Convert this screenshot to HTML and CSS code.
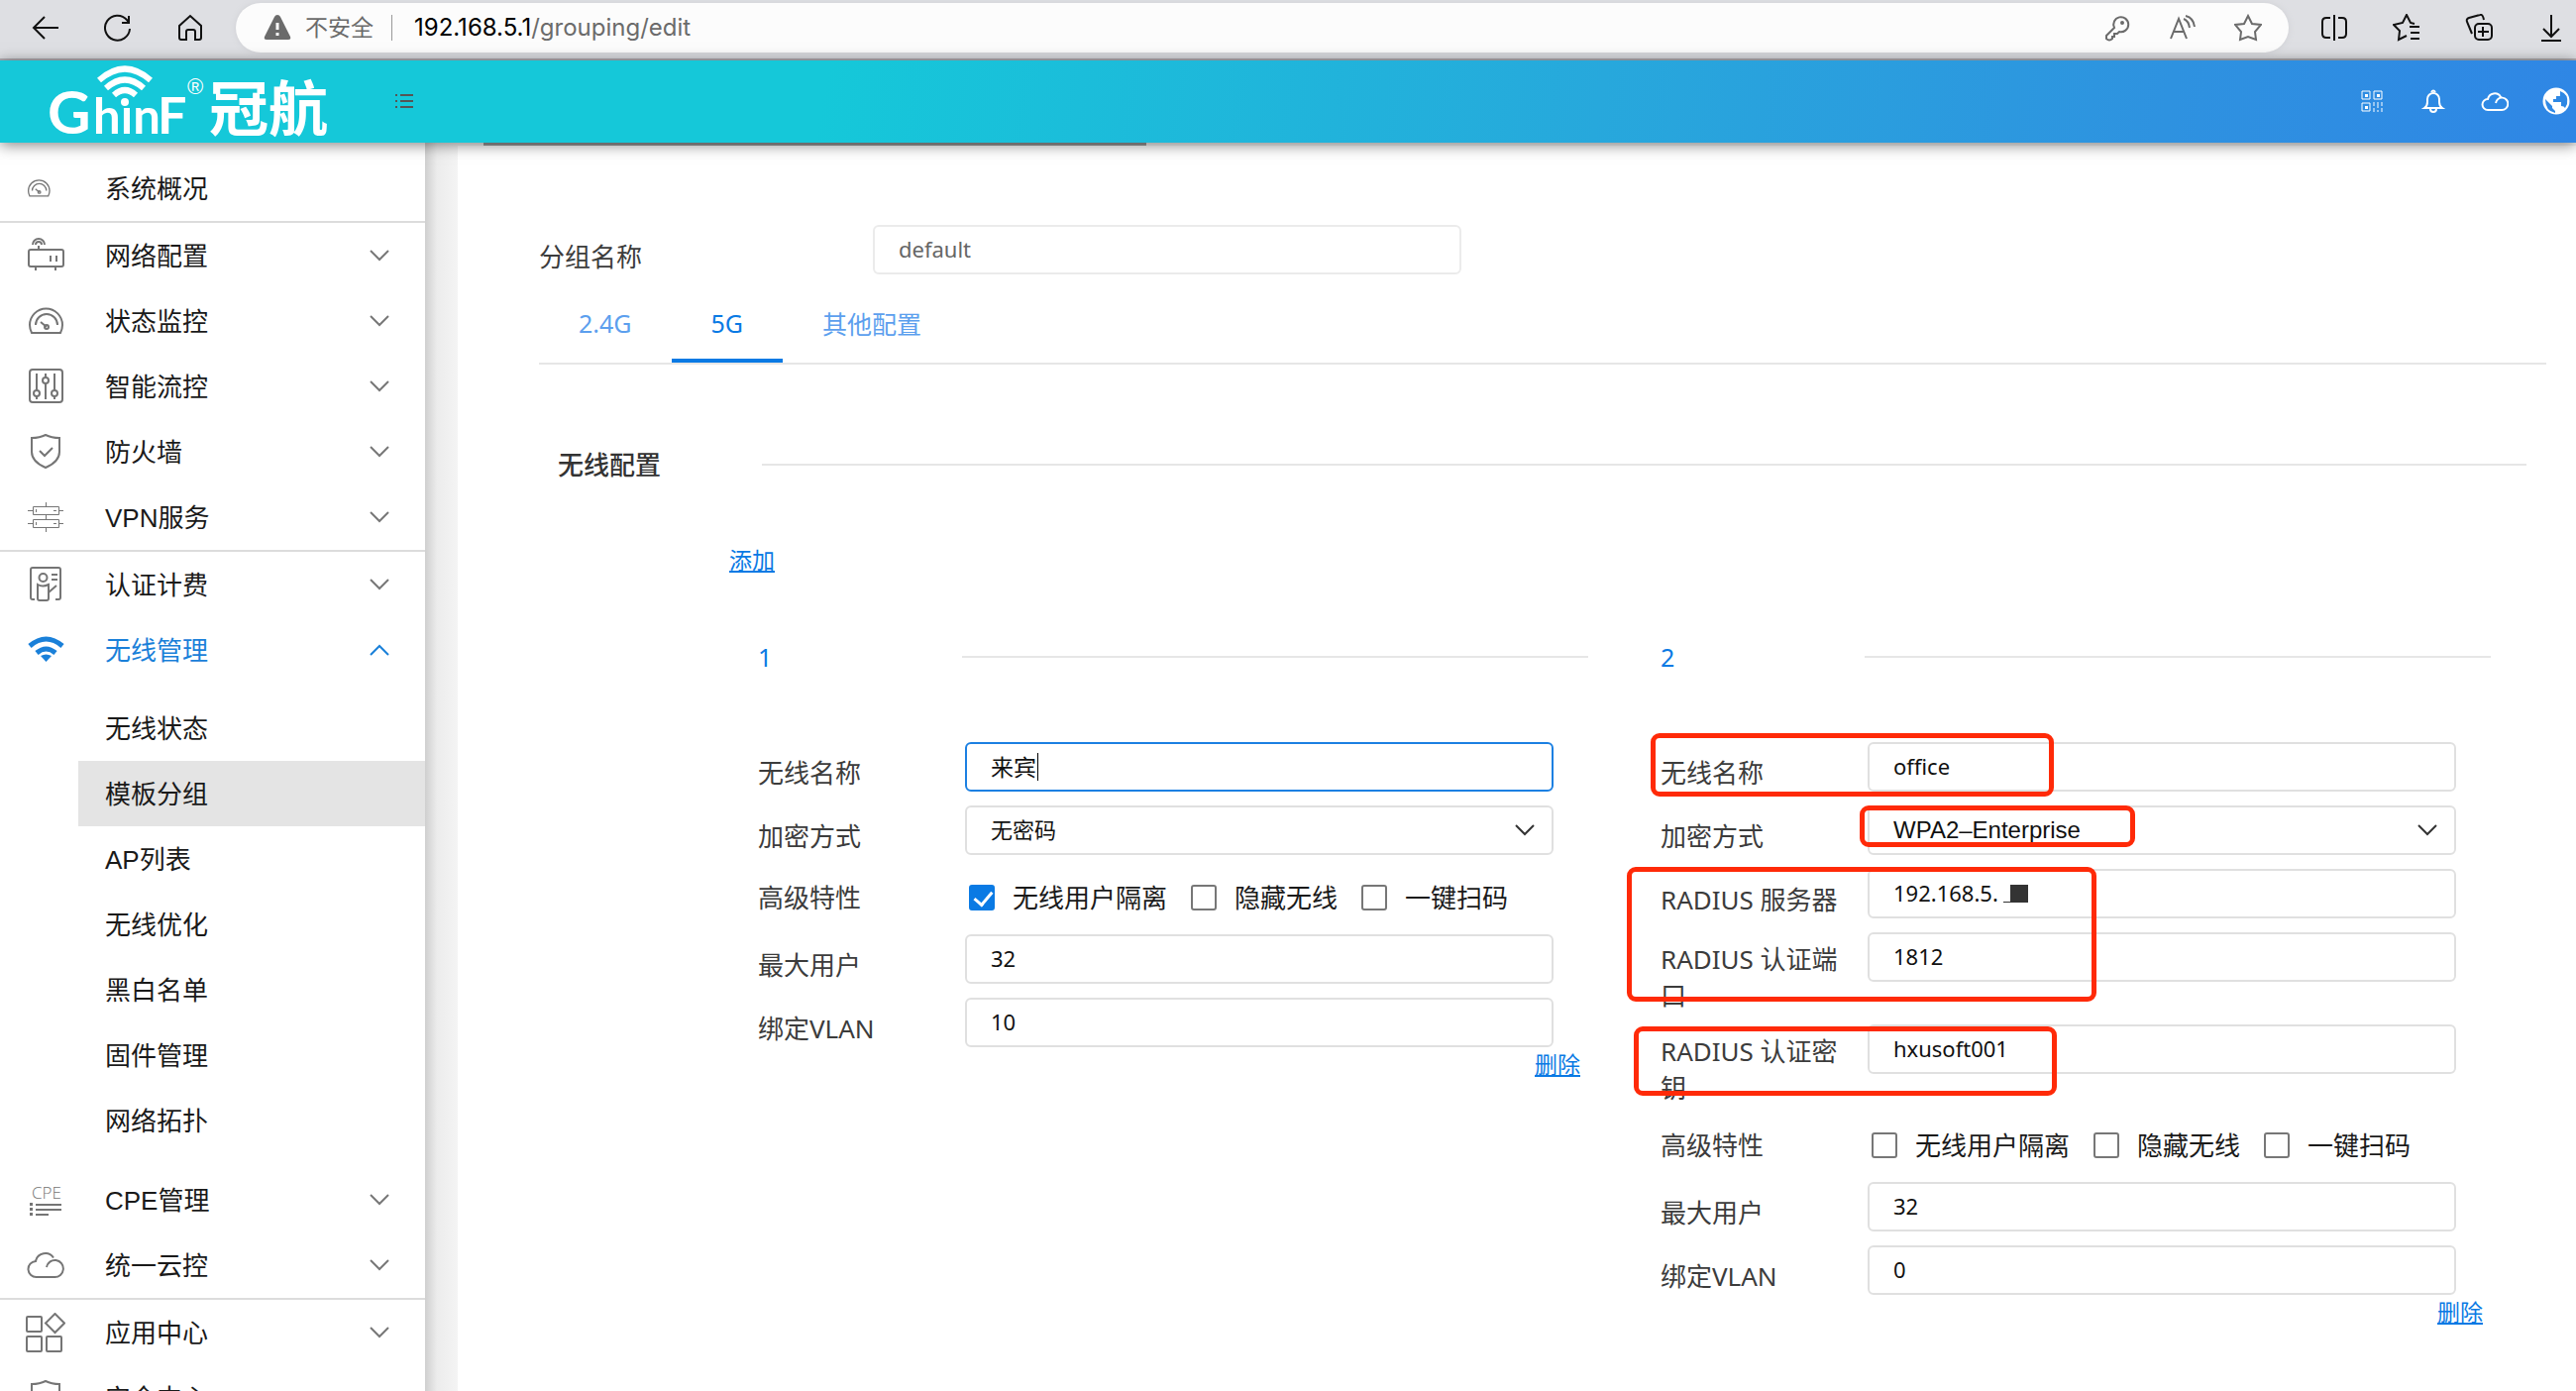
FILE: index.html
```html
<!DOCTYPE html>
<html lang="zh-CN">
<head>
<meta charset="utf-8">
<title>模板分组</title>
<link rel="stylesheet" href="styles.css">
</head>
<body>
<svg class="defs" aria-hidden="true">
  <symbol id="chevron" viewBox="0 0 22 14"><path d="M2 2l9 9 9-9"/></symbol>
  <symbol id="gauge" viewBox="0 0 40 40"><path d="M6 32Q4 28 4 24a16 16 0 0 1 33 0q0 4-2 8z"/><path d="M10 24a11 11 0 0 1 22 0"/><path d="M15 21l6 5"/><circle cx="21" cy="26" r="2"/></symbol>
  <symbol id="cloud" viewBox="0 0 40 40"><path d="M11 32a8 8 0 0 1-1-16 10 10 0 0 1 18-3.500M21 22a8.500 8.500 0 1 1 8 10H10"/></symbol>
  <symbol id="shield" viewBox="0 0 40 40"><path d="M6 6q8 0 14-3 6 3 14 3v14q0 10-14 16Q6 30 6 20z"/><path d="M14 19l5 5 8-8"/></symbol>
</svg>

<div class="toolbar">
  <div class="toolbar__group">
    <button class="tool" aria-label="返回"><svg viewBox="0 0 28 28"><path d="M27 14H2M13 3L2 14l11 11"/></svg></button>
    <button class="tool" aria-label="刷新"><svg viewBox="0 0 28 28"><path d="M26 15a12.500 12.500 0 1 1-3-9l2 3M25 2v7h-7"/></svg></button>
    <button class="tool" aria-label="主页"><svg viewBox="0 0 28 28"><path d="M3 12L14 2l11 10v12q0 2-2 2h-4v-8q0-2-2-2h-5q-2 0-2 2v8H5q-2 0-2-2z"/></svg></button>
  </div>
  <div class="address">
    <svg class="address__warn" viewBox="0 0 28 28"><path class="solid" d="M14 1q2 0 3 2l10 20q1 3-2 3H3q-3 0-2-3L11 3q1-2 3-2z"/><path class="mark" d="M14 9v7M14 19v3"/></svg>
    <span class="address__state">不安全</span>
    <span class="address__url"><b>192.168.5.1</b>/grouping/edit</span>
    <div class="address__tools">
      <button class="tool" aria-label="密码"><svg viewBox="0 0 28 28"><path d="M11 14a7.500 7.500 0 1 1 5 4l-2 2h-3v3H9v2q-3 3-6 0v-3z"/><circle cx="19" cy="9" r="1"/></svg></button>
      <button class="tool" aria-label="朗读"><svg viewBox="0 0 28 28"><path d="M2 25L10 5l8 20M5 18h10M15 5q5 2 6 9M17 2q8 2 9 11"/></svg></button>
      <button class="tool" aria-label="收藏"><svg viewBox="0 0 28 28"><path d="M14 2l4 8 9 1-6 7 1 8-8-3-8 3 1-8-6-7 9-1z"/></svg></button>
    </div>
  </div>
  <div class="toolbar__group">
    <button class="tool" aria-label="分屏"><svg viewBox="0 0 28 28"><path d="M10 4H6Q2 4 2 8v12q0 4 4 4h4M18 4h4q4 0 4 4v12q0 4-4 4h-4M14 1v26"/></svg></button>
    <button class="tool" aria-label="收藏夹"><svg viewBox="0 0 28 28"><path d="M22 10l-4-1-4-8-4 8-9 2 6 6-1 9 8-4M17 13h10M18 19h9M18 25h9"/></svg></button>
    <button class="tool" aria-label="集锦"><svg viewBox="0 0 28 28"><rect x="10" y="10" width="17" height="16" rx="4"/><path d="M18 13v10M13 18h11M7 20L2 8q-1-3 2-4l11-3q3-1 4 5"/></svg></button>
    <button class="tool" aria-label="下载"><svg viewBox="0 0 28 28"><path d="M14 1v22M6 15l8 8 8-8M4 27h20"/></svg></button>
  </div>
</div>

<header class="header">
  <svg class="logo" viewBox="0 -4 290 83" role="img" aria-label="GhinF 冠航">
    <text class="logo__latin" x="-2" y="70" font-size="60">G</text>
    <text class="logo__latin" x="44" y="70" font-size="49">hın</text>
    <text class="logo__latin" x="109" y="70" font-size="52">F</text>
    <text class="logo__reg" x="139" y="30">®</text>
    <text class="logo__cjk" x="161" y="67">冠航</text>
    <circle cx="76" cy="38" r="4"/>
    <path d="M50 16q26-23 52 0M57 24q19-17 38 0M65 31q11-10 22 0"/>
  </svg>
  <button class="header__menu" aria-label="菜单"><svg viewBox="0 0 18 16"><path d="M5 2h13M5 8h13M5 14h13M0 2h2M0 8h2M0 14h2"/></svg></button>
  <div class="header__tools">
    <button class="tool" aria-label="二维码"><svg class="qr" viewBox="0 0 28 28"><path d="M4 4h8v8H4zM16 4h8v8h-8zM4 16h8v8H4zM16 15v4M16 21v4M20 15v6M20 23v2M24 15v4M24 21v4"/><path class="solid" d="M7 7h3v3H7zM19 7h3v3h-3zM7 19h3v3H7z"/></svg></button>
    <button class="tool" aria-label="通知"><svg viewBox="0 0 28 28"><path d="M5 21q3-2 3-6v-3a6 6 0 0 1 12 0v3q0 4 3 6zM11 22a3 3 0 0 0 6 0M12 5q2-3 4 0"/></svg></button>
    <button class="tool" aria-label="云"><svg viewBox="0 0 28 28"><path d="M7 23a5.500 5.500 0 0 1 0-11 7 7 0 0 1 13-2M15 16a6.200 6.200 0 1 1 6 7H7"/></svg></button>
    <button class="tool" aria-label="语言"><svg viewBox="0 0 28 28"><circle class="solid" cx="14" cy="14" r="13.500"/><path class="land" d="M3 12l7 7v2l3 3v2Q3 24 3 12zM18 4q9 3 7 13l-2 4q-1-2-4-2v-4h-8v-3h3V9h4z"/></svg></button>
  </div>
</header>

<div class="app">
  <nav class="sidebar">
    <a class="nav" href="#"><svg class="nav__icon nav__icon--small"><use href="#gauge"/></svg>系统概况</a>
    <hr>
    <a class="nav" href="#"><svg class="nav__icon" viewBox="0 0 40 40"><rect x="3" y="14" width="35" height="17" rx="2"/><path d="M10 31v4M30 31v4M25 20v6M31 20v6M13 10v4M7 9a6 6 0 0 1 12 0M10 9a3 3 0 0 1 6 0"/></svg>网络配置<svg class="nav__arrow"><use href="#chevron"/></svg></a>
    <a class="nav" href="#"><svg class="nav__icon"><use href="#gauge"/></svg>状态监控<svg class="nav__arrow"><use href="#chevron"/></svg></a>
    <a class="nav" href="#"><svg class="nav__icon" viewBox="0 0 40 40"><rect x="4" y="3" width="33" height="33" rx="3"/><path d="M11 7v17M11 30v3M20 7v4M20 16v17M29 7v17M29 30v3"/><circle cx="11" cy="27" r="3"/><circle cx="20" cy="14" r="3"/><circle cx="29" cy="27" r="3"/></svg>智能流控<svg class="nav__arrow"><use href="#chevron"/></svg></a>
    <a class="nav" href="#"><svg class="nav__icon"><use href="#shield"/></svg>防火墙<svg class="nav__arrow"><use href="#chevron"/></svg></a>
    <a class="nav" href="#"><svg class="nav__icon nav__icon--thin" viewBox="0 0 40 40"><path d="M7.500 9.500h26v8h-26zM7.500 22.500h26v8h-26zM20.500 5v4M20.500 18v4M20.500 31v4M2 13.500h5M34 13.500h4M2 26.500h5M34 26.500h4M10.500 12v3M10.500 25v3M28 13.500h3M28 26.500h3"/></svg>VPN服务<svg class="nav__arrow"><use href="#chevron"/></svg></a>
    <hr>
    <a class="nav" href="#"><svg class="nav__icon" viewBox="0 0 40 40"><path d="M9 35H7q-2 0-2-2V5q0-2 2-2h26q2 0 2 2v28q0 2-2 2h-3M12 20q5 3 11 0v14q0 2-2 2h-7q-2 0-2-2zM23 28l8-7M26 10h6M26 15h6"/><circle cx="17.500" cy="13" r="4"/></svg>认证计费<svg class="nav__arrow"><use href="#chevron"/></svg></a>
    <a class="nav nav--open" href="#"><svg class="nav__icon" viewBox="0 0 40 40"><path class="wifi" d="M4 16q16.500-14 33 0M11 23q9.500-8 19 0"/><path class="solid" d="M15 26q5.500-3 11 0l-5.500 6z"/></svg>无线管理<svg class="nav__arrow"><use href="#chevron"/></svg></a>
    <div class="subnav">
      <a href="#">无线状态</a>
      <a class="is-active" href="#">模板分组</a>
      <a href="#">AP列表</a>
      <a href="#">无线优化</a>
      <a href="#">黑白名单</a>
      <a href="#">固件管理</a>
      <a href="#">网络拓扑</a>
    </div>
    <a class="nav" href="#"><svg class="nav__icon" viewBox="0 0 40 40"><text class="cpe" x="6" y="19">CPE</text><path d="M10 25h26M10 30h26M10 35h13"/><path class="solid" d="M4 23h3v3H4zM4 28h3v3H4zM4 33h3v3H4z"/></svg>CPE管理<svg class="nav__arrow"><use href="#chevron"/></svg></a>
    <a class="nav" href="#"><svg class="nav__icon"><use href="#cloud"/></svg>统一云控<svg class="nav__arrow"><use href="#chevron"/></svg></a>
    <hr>
    <a class="nav" href="#"><svg class="nav__icon" viewBox="0 0 40 40"><rect x="1" y="4" width="15" height="15" rx="1"/><rect x="1" y="24" width="15" height="15" rx="1"/><rect x="21" y="24" width="15" height="15" rx="1"/><path d="M29.500 1l9.500 9.500-9.500 9.500-9.500-9.500z"/></svg>应用中心<svg class="nav__arrow"><use href="#chevron"/></svg></a>
    <a class="nav" href="#"><svg class="nav__icon"><use href="#shield"/></svg>安全中心<svg class="nav__arrow"><use href="#chevron"/></svg></a>
  </nav>

  <main class="main">
    <div class="topbar"></div>
    <form class="panel">
      <div class="group-row">
        <label class="label" for="group">分组名称</label>
        <input class="input" id="group" value="default" disabled>
      </div>
      <div class="tabs" role="tablist">
        <button type="button" role="tab" class="tab">2.4G</button>
        <button type="button" role="tab" class="tab is-active" aria-selected="true">5G</button>
        <button type="button" role="tab" class="tab">其他配置</button>
      </div>
      <h2 class="section">无线配置</h2>
      <a class="link add" href="#">添加</a>

      <div class="blocks">
        <section class="block">
          <h3 class="block__title">1</h3>
          <div class="fields">
            <div class="field"><label class="label" for="n1">无线名称</label><div class="control"><input class="input is-focus" id="n1" value="来宾"><span class="caret"></span></div></div>
            <div class="field"><label class="label" for="e1">加密方式</label><div class="control"><select class="input" id="e1"><option>无密码</option></select><svg class="control__arrow"><use href="#chevron"/></svg></div></div>
            <div class="field field--checks"><span class="label">高级特性</span><div class="checks">
              <label><input type="checkbox" checked>无线用户隔离</label>
              <label><input type="checkbox">隐藏无线</label>
              <label><input type="checkbox">一键扫码</label></div></div>
            <div class="field"><label class="label" for="m1">最大用户</label><div class="control"><input class="input" id="m1" value="32"></div></div>
            <div class="field"><label class="label" for="v1">绑定VLAN</label><div class="control"><input class="input" id="v1" value="10"></div></div>
          </div>
          <a class="link delete" href="#">删除</a>
        </section>

        <section class="block">
          <h3 class="block__title">2</h3>
          <div class="fields">
            <div class="field"><label class="label" for="n2">无线名称</label><div class="control"><input class="input" id="n2" value="office"></div></div>
            <div class="field"><label class="label" for="e2">加密方式</label><div class="control"><select class="input input--latin" id="e2"><option>WPA2–Enterprise</option></select><svg class="control__arrow"><use href="#chevron"/></svg></div></div>
            <div class="field"><label class="label" for="r2">RADIUS 服务器</label><div class="control"><input class="input" id="r2" value="192.168.5."><span class="redaction"></span></div></div>
            <div class="field field--wrap"><label class="label" for="p2">RADIUS 认证端口</label><div class="control"><input class="input" id="p2" value="1812"></div></div>
            <div class="field field--wrap"><label class="label" for="k2">RADIUS 认证密钥</label><div class="control"><input class="input" id="k2" value="hxusoft001"></div></div>
            <div class="field field--checks"><span class="label">高级特性</span><div class="checks">
              <label><input type="checkbox">无线用户隔离</label>
              <label><input type="checkbox">隐藏无线</label>
              <label><input type="checkbox">一键扫码</label></div></div>
            <div class="field"><label class="label" for="m2">最大用户</label><div class="control"><input class="input" id="m2" value="32"></div></div>
            <div class="field"><label class="label" for="v2">绑定VLAN</label><div class="control"><input class="input" id="v2" value="0"></div></div>
            <span class="note note--name"></span>
            <span class="note note--cipher"></span>
            <span class="note note--server"></span>
            <span class="note note--key"></span>
          </div>
          <a class="link delete" href="#">删除</a>
        </section>
      </div>
    </form>
  </main>
</div>
</body>
</html>
```
FILE: styles.css
```css
* { box-sizing: border-box; }
body {
  margin: 0;
  height: 100vh;
  display: flex;
  flex-direction: column;
  overflow: hidden;
  background: #f2f2f2;
  font-family: "Noto Sans", "Noto Sans CJK SC", sans-serif;
  font-size: 26px;
}
a { color: inherit; text-decoration: none; }
button { border: 0; padding: 0; background: none; font: inherit; color: inherit; }
svg { fill: none; stroke: currentColor; stroke-width: 2; flex: none; }
svg text, svg .solid { fill: currentColor; stroke: none; }
.defs { position: absolute; width: 0; height: 0; }

/* browser toolbar */
.toolbar {
  display: flex;
  align-items: center;
  flex: none;
  height: 61px;
  padding: 0 11px 4px 32px;
  gap: 32px;
  background: #dedfe3;
  border-bottom: 2px solid #b0aeb4;
  color: #111;
}
.toolbar__group { display: flex; gap: 45px; }
.tool { display: block; width: 28px; height: 28px; }
.tool svg { display: block; width: 28px; height: 28px; }
.address {
  flex: 1;
  display: flex;
  align-items: center;
  height: 50px;
  padding: 0 27px 0 28px;
  border-radius: 25px;
  background: #fcfcfc;
  box-shadow: 0 0 6px #cfd0d4;
  color: #6b6b6b;
  font: 24px "Inter", "Noto Sans CJK SC", sans-serif;
}
.address__warn { width: 28px; height: 28px; margin-right: 14px; }
.address__warn .mark { stroke: #fcfcfc; stroke-width: 3; }
.address__state { padding-right: 18px; border-right: 1px solid #999; font-size: 23px; line-height: 26px; }
.address__url { margin-left: 22px; }
.address__url b { font-weight: 400; color: #000; }
.address__tools { display: flex; gap: 38px; margin-left: auto; }

/* product header */
.header {
  position: relative;
  z-index: 2;
  display: flex;
  align-items: center;
  flex: none;
  height: 83px;
  padding: 0 6px 0 50px;
  background: linear-gradient(100deg, #15c8d9 0%, #15c8d9 32%, #27a8dc 62%, #2e92e0 84%, #2f86e5 100%);
  box-shadow: 0 2px 14px rgba(0, 0, 0, .5);
  color: #fff;
}
.logo { width: 290px; height: 83px; overflow: visible; }
.logo circle { fill: #fff; stroke: none; }
.logo path { stroke-width: 6; }
.logo__latin { font-family: "Lato", sans-serif; font-weight: 700; }
.logo__reg { font: 22px "Liberation Sans", sans-serif; }
.logo__cjk { font: 700 60px "Noto Sans CJK SC", sans-serif; }
.header__menu { margin-left: 59px; padding-bottom: 2px; color: #555; }
.header__menu svg { display: block; width: 18px; height: 16px; }
.header__tools { display: flex; gap: 34px; margin-left: auto; padding-bottom: 2px; }
.header__tools .qr { stroke-width: 1; }
.header__tools .land { fill: #2f88e4; stroke: none; }

/* layout */
.app { flex: 1; display: flex; min-height: 0; }
.sidebar {
  position: relative;
  z-index: 1;
  flex: none;
  width: 429px;
  padding-top: 13px;
  overflow: hidden;
  background: #fff;
  color: #1a1a1a;
  font-family: "Liberation Sans", "Noto Sans CJK SC", sans-serif;
}
.sidebar hr { height: 2px; margin: 0; border: 0; background: #dcdcdc; }
.nav { display: flex; align-items: center; height: 66px; padding: 0 35px 3px 26px; }
.nav svg { margin-top: 3px; }
.nav__icon { width: 40px; height: 40px; margin-right: 40px; color: #757575; }
.nav__icon--small { width: 26px; height: 26px; margin-right: 54px; }
.nav__icon--thin { stroke-width: 1; }
.nav__arrow { width: 22px; height: 14px; margin-left: auto; color: #777; }
.nav--open, .nav--open svg { color: #1a80d9; }
.nav--open .nav__arrow { transform: rotate(180deg); }
.wifi { stroke-width: 5; }
.cpe { font: 300 17px "Open Sans", sans-serif; }
.subnav { padding: 13px 0 14px 79px; }
.subnav a { padding-left: 27px; display: block; line-height: 68px; height: 66px; }
.subnav .is-active { background: #e4e4e4; }

.main {
  flex: 1;
  min-width: 0;
  padding-left: 33px;
  background: linear-gradient(90deg, #cfcfcf 0, #ececec 12px, #f4f4f4 33px);
}
.topbar { width: 669px; height: 3px; margin-left: 26px; background: #999; }
.panel { min-height: 100%; padding: 80px 30px 0 82px; background: #fff; }

/* form */
.label { color: #3c3c3c; line-height: 37px; }
.input {
  display: block;
  width: 100%;
  height: 50px;
  padding: 0 24px 2px;
  border: 2px solid #e0e0e0;
  border-radius: 6px;
  background: #fff;
  color: #111;
  font: 22px "Noto Sans", "Noto Sans CJK SC", sans-serif;
  appearance: none;
  outline: 0;
}
.input:disabled { color: #666; border-color: #ebebeb; }
.input.is-focus { border-color: #1c80e2; font-size: 23px; }
.input--latin { font-family: "Liberation Sans", sans-serif; font-size: 24px; }
.group-row { display: grid; grid-template-columns: 337px 594px; }
.group-row .label { padding-top: 14px; }
.group-row .label { height: 50px; }
.tabs { display: flex; margin-top: 12px; border-bottom: 2px solid #e6e6e6; }
.tab { height: 77px; padding: 0 40px; border-bottom: 4px solid transparent; color: #5c9fee; font-size: 25px; }
.tab.is-active { border-color: #0a7ae4; color: #0a7ae4; }
.section {
  display: flex;
  align-items: center;
  gap: 102px;
  margin: 82px 20px 0 19px;
  color: #333;
  font-size: 26px;
  font-weight: 500;
  line-height: 38px;
}
.section::after, .block__title::after { content: ""; flex: 1; height: 2px; background: #e6e6e6; }
.link { color: #0a7ae4; font-size: 23px; line-height: 34px; text-decoration: underline; }
.add { display: block; width: max-content; margin: 60px 0 0 192px; }
.blocks { display: grid; grid-template-columns: 1fr 1fr; gap: 73px; margin: 62px 56px 0 221px; }
.block__title {
  display: grid;
  grid-template-columns: 206px 1fr;
  align-items: center;
  margin: 0 0 67px;
  color: #0a7ae4;
  font-size: 25px;
  font-weight: 400;
  line-height: 38px;
}
.fields { position: relative; padding-right: 35px; }
.field { display: grid; grid-template-columns: 190px 1fr; column-gap: 19px; padding-bottom: 14px; }
.field:nth-last-child(1), .block:last-child .field:nth-child(8) { padding-bottom: 0; }
.field > .label { height: 50px; padding-top: 13px; }
.field--wrap { padding-bottom: 10px; }
.field--wrap > .label { height: 83px; padding-top: 9px; }
.field--checks > .label { height: 52px; padding-top: 11px; }
.control { position: relative; }
.control__arrow { position: absolute; top: 18px; right: 18px; width: 22px; height: 14px; color: #333; }
.caret { position: absolute; top: 11px; left: 73px; width: 1px; height: 28px; background: #000; }
.redaction { position: absolute; top: 16px; left: 144px; width: 18px; height: 18px; background: #333; }
.redaction::before { content: ""; position: absolute; right: 100%; bottom: 0; width: 7px; height: 1px; background: #333; }
.checks { display: flex; gap: 24px; height: 52px; padding: 4px 0 0 4px; color: #1a1a1a; white-space: nowrap; }
.checks label { display: flex; align-items: center; gap: 18px; }
.checks input {
  appearance: none;
  width: 26px;
  height: 26px;
  margin: 2px 0 0;
  border: 2px solid #777;
  border-radius: 3px;
  background: #fff;
}
.checks input:checked { border-color: #0a7ae4; background: #0a7ae4; }
.checks input:checked::after {
  content: "";
  display: block;
  width: 8px;
  height: 15px;
  margin: 1px 0 0 7px;
  border: solid #fff;
  border-width: 0 3px 3px 0;
  transform: rotate(40deg);
}
.delete { display: block; width: max-content; margin: 0 8px 0 auto; }

/* highlight frames drawn over the second block */
.note { position: absolute; border: 5px solid #ff2a08; border-radius: 9px; pointer-events: none; }
.note--name { left: -10px; top: -9px; width: 407px; height: 64px; }
.note--cipher { left: 201px; top: 64px; width: 278px; height: 42px; }
.note--server { left: -34px; top: 126px; width: 474px; height: 136px; }
.note--key { left: -27px; top: 287px; width: 427px; height: 70px; }
```
